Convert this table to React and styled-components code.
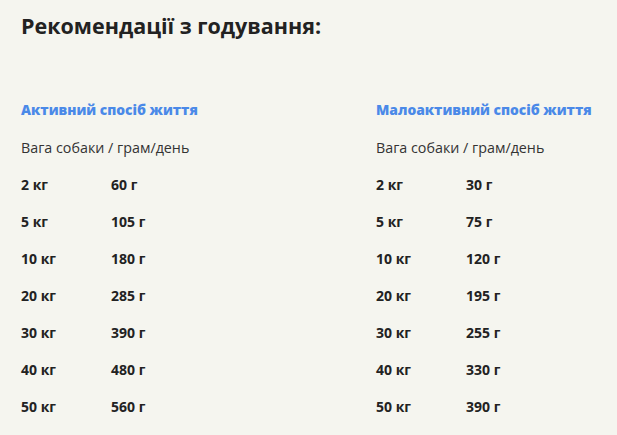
import React from "react";
import styled, { createGlobalStyle } from "styled-components";

const GlobalStyle = createGlobalStyle`
  body {
    margin: 0;
    background: #f5f5ef;
    font-family: "Open Sans", "DejaVu Sans", sans-serif;
    color: #222;
  }
`;

const Page = styled.div`
  padding: 11px 21px 0;
`;

const Title = styled.h2`
  margin: 0;
  font-size: 21.5px;
  font-weight: 700;
  line-height: 30px;
  color: #222;
`;

const Columns = styled.div`
  display: grid;
  grid-template-columns: 355px 1fr;
  margin-top: 59px;
`;

const Column = styled.div`
  display: flex;
  flex-direction: column;
`;

const Heading = styled.h3`
  margin: 0;
  font-size: 13.8px;
  font-weight: 800;
  line-height: 20px;
  color: #4a89e8;
  white-space: nowrap;
`;

const Caption = styled.div`
  margin-top: 18px;
  font-size: 14.3px;
  line-height: 20px;
  color: #333;
`;

const Row = styled.div`
  display: grid;
  grid-template-columns: 90px 1fr;
  margin-top: 17px;
  font-size: 14px;
  font-weight: 700;
  line-height: 20px;
  color: #222;
`;

const active = [
  ["2 кг", "60 г"],
  ["5 кг", "105 г"],
  ["10 кг", "180 г"],
  ["20 кг", "285 г"],
  ["30 кг", "390 г"],
  ["40 кг", "480 г"],
  ["50 кг", "560 г"],
];

const lowActive = [
  ["2 кг", "30 г"],
  ["5 кг", "75 г"],
  ["10 кг", "120 г"],
  ["20 кг", "195 г"],
  ["30 кг", "255 г"],
  ["40 кг", "330 г"],
  ["50 кг", "390 г"],
];

const FeedColumn = ({ title, rows }) => (
  <Column>
    <Heading>{title}</Heading>
    <Caption>Вага собаки / грам/день</Caption>
    {rows.map(([weight, grams]) => (
      <Row key={weight}>
        <span>{weight}</span>
        <span>{grams}</span>
      </Row>
    ))}
  </Column>
);

const App = () => (
  <>
    <GlobalStyle />
    <Page>
      <Title>Рекомендації з годування:</Title>
      <Columns>
        <FeedColumn title="Активний спосіб життя" rows={active} />
        <FeedColumn title="Малоактивний спосіб життя" rows={lowActive} />
      </Columns>
    </Page>
  </>
);

export default App;
